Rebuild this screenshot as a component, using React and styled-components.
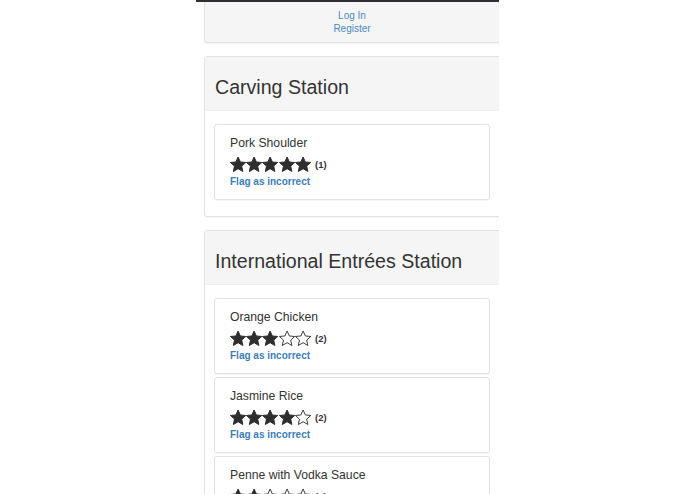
import React from "react";
import styled, { createGlobalStyle } from "styled-components";

const Global = createGlobalStyle`
  html, body { margin: 0; padding: 0; background: #fff; }
  body { font-family: "Liberation Sans", Arial, sans-serif; color: #333; }
`;

const Column = styled.div`
  width: 303px;
  margin: 0 auto;
  height: 494px;
  overflow: hidden;
  background: #fff;
`;

const TopBar = styled.div`
  height: 2px;
  background: #2f2f33;
`;

const Content = styled.div`
  padding-left: 8px;
  display: flex;
  flex-direction: column;
  gap: 13px;
`;

const LoginPanel = styled.div`
  width: 300px;
  box-sizing: border-box;
  background: #f5f5f5;
  border: 1px solid #e2e2e2;
  border-top: none;
  border-radius: 0 0 3px 3px;
  box-shadow: 0 1px 1px rgba(0, 0, 0, 0.04);
  padding: 7px 4px 7px 0;
  display: flex;
  flex-direction: column;
  align-items: center;
`;

const NavLink = styled.a`
  font-size: 10px;
  line-height: 13px;
  color: #4f8ac6;
  text-decoration: none;
`;

const Panel = styled.section`
  width: 300px;
  box-sizing: border-box;
  border: 1px solid #e2e2e2;
  border-radius: 3px;
  box-shadow: 0 1px 1px rgba(0, 0, 0, 0.04);
  background: #fff;
`;

const PanelHeading = styled.div`
  background: #f5f5f5;
  border-bottom: 1px solid #efefef;
  padding: 19px 10px 12px;
`;

const PanelTitle = styled.h3`
  margin: 0;
  font-size: 19.6px;
  line-height: 22px;
  font-weight: normal;
  color: #333;
`;

const PanelBody = styled.div`
  padding: 13px 13px 16px 9px;
  display: flex;
  flex-direction: column;
  gap: 3px;
`;

const Card = styled.div`
  border: 1px solid #e2e2e2;
  border-radius: 3px;
  box-shadow: 0 1px 1px rgba(0, 0, 0, 0.04);
  padding: 10px 15px 11px;
  background: #fff;
`;

const ItemName = styled.div`
  font-size: 12.2px;
  line-height: 16px;
  color: #333;
`;

const RatingRow = styled.div`
  display: flex;
  align-items: center;
  height: 18px;
  margin-top: 4px;
`;

const Stars = styled.div`
  display: flex;
  width: 81px;
  justify-content: space-between;
`;

const Count = styled.span`
  margin-left: 4px;
  font-size: 9.5px;
  font-weight: bold;
  color: #333;
`;

const Flag = styled.a`
  display: block;
  margin-top: 2px;
  font-size: 10px;
  line-height: 13px;
  font-weight: bold;
  color: #3a7dbd;
  text-decoration: none;
`;

const STAR = "12,1.2 15.2,8.2 22.8,8.9 17.1,14 18.7,21.6 12,17.7 5.3,21.6 6.9,14 1.2,8.9 8.8,8.2";

const Star = ({ filled }) => (
  <svg width="16.2" height="16.5" viewBox="0.6 0.4 22.8 22">
    <polygon
      points={STAR}
      fill={filled ? "#2e2e2e" : "none"}
      stroke="#2e2e2e"
      strokeWidth={filled ? 1.4 : 1.3}
      strokeLinejoin="round"
    />
  </svg>
);

const Item = ({ name, rating, count }) => (
  <Card>
    <ItemName>{name}</ItemName>
    <RatingRow>
      <Stars>
        {[0, 1, 2, 3, 4].map((i) => (
          <Star key={i} filled={i < rating} />
        ))}
      </Stars>
      <Count>({count})</Count>
    </RatingRow>
    <Flag href="#">Flag as incorrect</Flag>
  </Card>
);

const stations = [
  {
    title: "Carving Station",
    items: [{ name: "Pork Shoulder", rating: 5, count: 1 }],
  },
  {
    title: "International Entrées Station",
    items: [
      { name: "Orange Chicken", rating: 3, count: 2 },
      { name: "Jasmine Rice", rating: 4, count: 2 },
      { name: "Penne with Vodka Sauce", rating: 2, count: 1 },
    ],
  },
];

export default function App() {
  return (
    <>
      <Global />
      <Column>
        <TopBar />
        <Content>
          <LoginPanel>
            <NavLink href="#">Log In</NavLink>
            <NavLink href="#">Register</NavLink>
          </LoginPanel>
          {stations.map((s) => (
            <Panel key={s.title}>
              <PanelHeading>
                <PanelTitle>{s.title}</PanelTitle>
              </PanelHeading>
              <PanelBody>
                {s.items.map((it) => (
                  <Item key={it.name} {...it} />
                ))}
              </PanelBody>
            </Panel>
          ))}
        </Content>
      </Column>
    </>
  );
}
